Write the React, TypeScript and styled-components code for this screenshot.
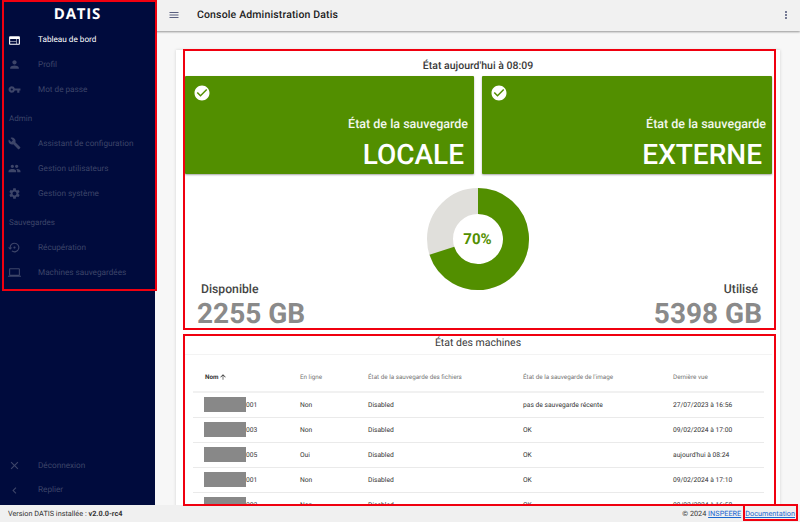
import React from 'react';
import styled, { createGlobalStyle } from 'styled-components';
import {
  MdWeb,
  MdPerson,
  MdVpnKey,
  MdBuild,
  MdPeople,
  MdSettings,
  MdSettingsBackupRestore,
  MdLaptop,
  MdClose,
  MdChevronLeft,
  MdMenu,
  MdMoreVert,
  MdCheckCircle,
  MdArrowUpward,
} from 'react-icons/md';

const GREEN = '#528f00';

const GlobalStyle = createGlobalStyle`
  html, body { margin: 0; padding: 0; height: 100%; overflow: hidden; }
  body {
    font-family: Roboto, "Liberation Sans", sans-serif;
    background: #f7f7f7;
    text-rendering: geometricPrecision;
  }
  * { box-sizing: border-box; }
`;

const Page = styled.div`
  position: relative;
  width: 800px;
  height: 522px;
  display: grid;
  grid-template-rows: 505px 17px;
  overflow: hidden;
`;

const Body = styled.div`
  display: grid;
  grid-template-columns: 155px 1fr;
  min-height: 0;
`;

const Sidebar = styled.nav`
  background: #000b3d;
  display: flex;
  flex-direction: column;
  min-height: 0;
`;

const Logo = styled.div`
  height: 27px;
  padding: 6px 0 0 0;
  text-align: center;
  color: #fff;
  font-family: 'Open Sans', sans-serif;
  font-size: 15px;
  font-weight: 700;
  line-height: 17px;
  letter-spacing: 0.8px;
`;

const NavItem = styled.div<{ $active?: boolean }>`
  height: 24.8px;
  display: flex;
  align-items: center;
  padding: 1.5px 0 0 8px;
  font-size: 8.2px;
  color: ${(p) => (p.$active ? '#fff' : '#3d4569')};
  white-space: nowrap;

  svg {
    width: 13px;
    height: 13px;
    margin-right: 17px;
    flex: none;
    color: ${(p) => (p.$active ? '#fff' : '#3d4569')};
  }
`;

const NavHeading = styled.div`
  height: 29.4px;
  padding: 13px 0 0 9px;
  font-size: 8px;
  line-height: 10px;
  color: #3d4569;
`;

const NavBottom = styled.div`
  margin-top: auto;
  padding-bottom: 3px;
`;

const Main = styled.main`
  display: flex;
  flex-direction: column;
  min-width: 0;
  min-height: 0;
`;

const TopBar = styled.header`
  flex: none;
  height: 31px;
  background: #f1f1f1;
  box-shadow: 0 1px 2px rgba(0, 0, 0, 0.4);
  display: flex;
  align-items: center;
  padding: 0 8px 2px 13px;
  color: #222;
  position: relative;

  svg {
    color: #5a6080;
  }
`;

const TopTitle = styled.h1`
  margin: 0 0 0 17px;
  font-size: 10.5px;
  font-weight: 500;
  letter-spacing: 0.15px;
  flex: 1;
`;

const Content = styled.div`
  flex: 1;
  min-height: 0;
  overflow: hidden;
  padding: 19px 20px 0 21px;
`;

const Card = styled.div`
  background: #fff;
  box-shadow: 0 0 3px rgba(0, 0, 0, 0.15);
  padding: 0 8px;
  height: 520px;
`;

const SectionTitle = styled.h2`
  margin: 0;
  height: 26px;
  padding-top: 9px;
  text-align: center;
  font-size: 10.5px;
  line-height: 13px;
  font-weight: 500;
  color: #3a3a3a;
`;

const StatusRow = styled.div`
  display: grid;
  grid-template-columns: 289px 290px;
  gap: 8px;
  margin-left: 1px;
`;

const StatusCard = styled.div`
  position: relative;
  height: 98px;
  background: ${GREEN};
  border-radius: 1px;
  box-shadow: 0 1px 2px rgba(0, 0, 0, 0.35);
  color: #fff;
  text-align: right;
  padding: 42px 6px 0 0;

  > svg {
    position: absolute;
    left: 8px;
    top: 8px;
    width: 18px;
    height: 18px;
  }
`;

const StatusLabel = styled.div`
  font-size: 12.5px;
  line-height: 14px;
  font-weight: 500;
  opacity: 0.93;
`;

const StatusValue = styled.div`
  margin-top: 7px;
  padding-right: 4px;
  font-size: 28px;
  line-height: 31px;
  font-weight: 500;
`;

const GaugeRow = styled.div`
  display: grid;
  grid-template-columns: 1fr 104px 1fr;
  align-items: end;
  height: 157px;
  padding: 0 10px 0 5px;
`;

const Stat = styled.div<{ $right?: boolean }>`
  text-align: ${(p) => (p.$right ? 'right' : 'left')};
  padding-bottom: 1px;
  padding-left: ${(p) => (p.$right ? 0 : '8px')};
`;

const StatLabel = styled.div<{ $right?: boolean }>`
  font-size: 12.2px;
  line-height: 15px;
  font-weight: 500;
  color: #444;
  padding: ${(p) => (p.$right ? '0 4px 0 0' : '0 0 0 4px')};
`;

const StatValue = styled.div`
  font-size: 28px;
  line-height: 33px;
  font-weight: 700;
  color: #8a8a8a;
`;

const Gauge = styled.div`
  position: relative;
  align-self: start;
  margin: 13px 0 0 2px;
  width: 104px;
  height: 104px;
`;

const GaugeText = styled.div`
  position: absolute;
  inset: 0;
  display: flex;
  align-items: center;
  justify-content: center;
  font-size: 15px;
  font-weight: 700;
  color: ${GREEN};
`;

const MachinesHead = styled(SectionTitle)`
  height: 22px;
  padding-top: 3px;
  margin-top: 2px;
  font-weight: 400;
  border-bottom: 1px solid #f3f3f3;
`;

const TableWrap = styled.div`
  padding: 7px 10px 0 9px;
`;

const Table = styled.table`
  width: 571px;
  border-collapse: collapse;
  table-layout: fixed;
  font-size: 6.7px;
  color: #333;
`;

const Th = styled.th<{ $strong?: boolean }>`
  height: 30px;
  padding: 0;
  text-align: left;
  font-size: 6.3px;
  font-weight: ${(p) => (p.$strong ? 700 : 400)};
  color: ${(p) => (p.$strong ? '#333' : '#777')};
  border-bottom: 2px solid #f1f1f1;
  white-space: nowrap;

  &:first-child {
    padding-left: 12px;
  }

  svg {
    width: 8px;
    height: 8px;
    vertical-align: -2px;
    margin-left: 1px;
  }
`;

const Td = styled.td`
  height: 25px;
  padding: 0;
  border-bottom: 1px solid #eaeaea;
  white-space: nowrap;
`;

const NameCell = styled.div`
  display: flex;
  align-items: center;
  padding-left: 11px;
`;

const Redacted = styled.span`
  width: 42px;
  height: 15px;
  background: #888;
  flex: none;
`;

const Footer = styled.footer`
  background: #f0f0f0;
  display: flex;
  align-items: center;
  justify-content: space-between;
  padding: 0 5px 0 8px;
  font-size: 7.3px;
  color: #333;
`;

const FooterLinks = styled.div`
  display: flex;
  gap: 4px;
`;

const FooterLink = styled.a`
  color: #1a66d0;
  text-decoration: underline;
`;

// annotation frames drawn over the screenshot
const Frame = styled.div<{ $x: number; $y: number; $w: number; $h: number }>`
  position: absolute;
  left: ${(p) => p.$x}px;
  top: ${(p) => p.$y}px;
  width: ${(p) => p.$w}px;
  height: ${(p) => p.$h}px;
  border: 2px solid #f0000f;
  pointer-events: none;
`;

const rows = [
  ['001', 'Non', 'Disabled', 'pas de sauvegarde récente', '27/07/2023 à 16:56'],
  ['003', 'Non', 'Disabled', 'OK', '09/02/2024 à 17:00'],
  ['005', 'Oui', 'Disabled', 'OK', "aujourd'hui à 08:24"],
  ['001', 'Non', 'Disabled', 'OK', '09/02/2024 à 17:10'],
  ['002', 'Non', 'Disabled', 'OK', '09/02/2024 à 16:58'],
];

const donutPath = (percent: number) => {
  const a = (percent / 100) * 2 * Math.PI;
  const x = 52 + 38 * Math.sin(a);
  const y = 52 - 38 * Math.cos(a);
  return `M52 14 A38 38 0 ${percent > 50 ? 1 : 0} 1 ${x} ${y}`;
};

const App: React.FC = () => (
  <Page>
    <GlobalStyle />
    <Body>
      <Sidebar>
        <Logo>DATIS</Logo>
        <NavItem $active><MdWeb />Tableau de bord</NavItem>
        <NavItem><MdPerson />Profil</NavItem>
        <NavItem><MdVpnKey />Mot de passe</NavItem>
        <NavHeading>Admin</NavHeading>
        <NavItem><MdBuild />Assistant de configuration</NavItem>
        <NavItem><MdPeople />Gestion utilisateurs</NavItem>
        <NavItem><MdSettings />Gestion système</NavItem>
        <NavHeading>Sauvegardes</NavHeading>
        <NavItem><MdSettingsBackupRestore />Récupération</NavItem>
        <NavItem><MdLaptop />Machines sauvegardées</NavItem>
        <NavBottom>
          <NavItem><MdClose />Déconnexion</NavItem>
          <NavItem><MdChevronLeft />Replier</NavItem>
        </NavBottom>
      </Sidebar>
      <Main>
        <TopBar>
          <MdMenu size={12} />
          <TopTitle>Console Administration Datis</TopTitle>
          <MdMoreVert size={12} />
        </TopBar>
        <Content>
          <Card>
            <SectionTitle>État aujourd'hui à 08:09</SectionTitle>
            <StatusRow>
              <StatusCard>
                <MdCheckCircle />
                <StatusLabel>État de la sauvegarde</StatusLabel>
                <StatusValue>LOCALE</StatusValue>
              </StatusCard>
              <StatusCard>
                <MdCheckCircle />
                <StatusLabel>État de la sauvegarde</StatusLabel>
                <StatusValue>EXTERNE</StatusValue>
              </StatusCard>
            </StatusRow>
            <GaugeRow>
              <Stat>
                <StatLabel>Disponible</StatLabel>
                <StatValue>2255 GB</StatValue>
              </Stat>
              <Gauge>
                <svg width="104" height="104" viewBox="0 0 104 104">
                  <circle cx="52" cy="52" r="38" fill="none" stroke="#e0dfdb" strokeWidth="26" />
                  <path d={donutPath(70)} fill="none" stroke={GREEN} strokeWidth="26" />
                </svg>
                <GaugeText>70%</GaugeText>
              </Gauge>
              <Stat $right>
                <StatLabel $right>Utilisé</StatLabel>
                <StatValue>5398 GB</StatValue>
              </Stat>
            </GaugeRow>
            <MachinesHead>État des machines</MachinesHead>
            <TableWrap>
              <Table>
                <colgroup>
                  <col style={{ width: 107 }} />
                  <col style={{ width: 68 }} />
                  <col style={{ width: 155 }} />
                  <col style={{ width: 150 }} />
                  <col style={{ width: 91 }} />
                </colgroup>
                <thead>
                  <tr>
                    <Th $strong>Nom<MdArrowUpward /></Th>
                    <Th>En ligne</Th>
                    <Th>État de la sauvegarde des fichiers</Th>
                    <Th>État de la sauvegarde de l'image</Th>
                    <Th>Dernière vue</Th>
                  </tr>
                </thead>
                <tbody>
                  {rows.map((r, i) => (
                    <tr key={i}>
                      <Td>
                        <NameCell>
                          <Redacted />
                          {r[0]}
                        </NameCell>
                      </Td>
                      <Td>{r[1]}</Td>
                      <Td>{r[2]}</Td>
                      <Td>{r[3]}</Td>
                      <Td>{r[4]}</Td>
                    </tr>
                  ))}
                </tbody>
              </Table>
            </TableWrap>
          </Card>
        </Content>
      </Main>
    </Body>
    <Footer>
      <span>
        Version DATIS installée : <b>v2.0.0-rc4</b>
      </span>
      <FooterLinks>
        <span>
          © 2024 <FooterLink href="#">INSPEERE</FooterLink>
        </span>
        <FooterLink href="#">Documentation</FooterLink>
      </FooterLinks>
    </Footer>
    <Frame $x={2} $y={0} $w={155} $h={291} />
    <Frame $x={183} $y={49} $w={593} $h={281} />
    <Frame $x={183} $y={334} $w={593} $h={172} />
    <Frame $x={743} $y={504} $w={55} $h={17} />
  </Page>
);

export default App;
